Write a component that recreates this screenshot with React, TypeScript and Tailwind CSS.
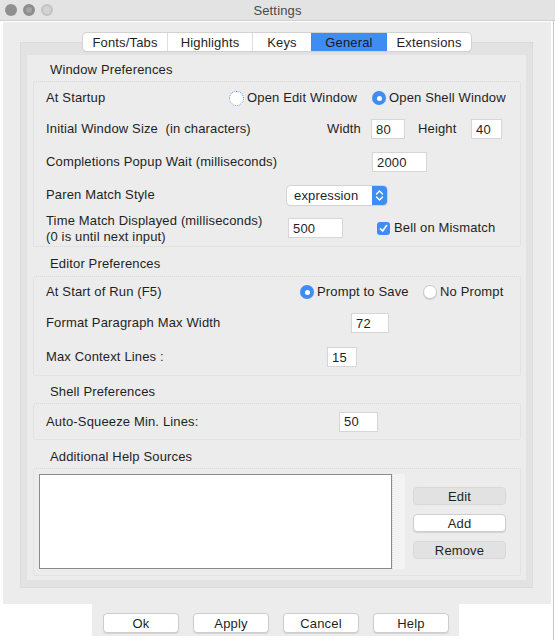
import React from "react";

function Radio({ checked, focus }: { checked?: boolean; focus?: boolean }) {
  if (checked) {
    return (
      <span className="w-[14px] h-[14px] rounded-full bg-[#3f8cf5] flex items-center justify-center shrink-0">
        <span className="w-[5px] h-[5px] rounded-full bg-white" />
      </span>
    );
  }
  return (
    <span
      className={
        focus
          ? "w-[15px] h-[15px] rounded-full bg-white border border-dotted border-[#5b8fe0] shrink-0"
          : "w-[14px] h-[14px] rounded-full bg-white border border-[#c9c9c9] shadow-[0_1px_1px_rgba(0,0,0,0.12)] shrink-0"
      }
    />
  );
}

function Field({ value, w }: { value: string; w: string }) {
  return (
    <div className={`${w} h-[20px] bg-white border border-[#d6d6d6] pl-[4px] flex items-center leading-none`}>
      {value}
    </div>
  );
}

function GroupLabel({ text, h, pt }: { text: string; h: string; pt: string }) {
  return (
    <div className={`${h} ${pt} pl-[17px] leading-[16px]`}>{text}</div>
  );
}

function TitleBar() {
  return (
    <div className="h-[21px] bg-[#e3e3e3] border-b border-[#d0d0d0] relative flex items-center justify-center">
      <div className="absolute left-[5px] top-[4px] flex gap-[6px]">
        <span className="w-[12px] h-[12px] rounded-full bg-[#8f8f8f]" />
        <span className="w-[12px] h-[12px] rounded-full bg-[#a3a3a3] border-[3px] border-[#8d8d8d]" />
        <span className="w-[12px] h-[12px] rounded-full bg-[#d2d2d2] border-2 border-[#c2c2c2]" />
      </div>
      <span className="text-[#4a4a4a] leading-none">Settings</span>
    </div>
  );
}

const tabs = [
  { name: "Fonts/Tabs", w: "w-[84px]" },
  { name: "Highlights", w: "w-[85px]" },
  { name: "Keys", w: "w-[59px]" },
  { name: "General", w: "w-[76px]" },
  { name: "Extensions", w: "w-[84px]" },
];

function Btn({ label, disabled, w, h }: { label: string; disabled?: boolean; w: string; h: string }) {
  return (
    <div
      className={`${w} ${h} rounded-[4px] flex items-center justify-center leading-none border ${
        disabled ? "bg-[#e2e2e2] border-[#d8d8d8]" : "bg-white border-[#cdcdcd] shadow-[0_1px_1px_rgba(0,0,0,0.1)]"
      }`}
    >
      {label}
    </div>
  );
}

export default function App() {
  return (
    <div className="w-[555px] h-[640px] bg-white relative font-['Liberation_Sans',Arial,sans-serif] text-[13px] tracking-[0.15px] text-[#1f1f1f] overflow-hidden">
      <TitleBar />
      <div className="absolute right-[1px] top-[21px] bottom-0 w-px bg-[#c4c4c4]" />

      <div className="mx-[3px] mt-px w-[548px] h-[582px] bg-[#ececec] pt-[11px]">
        {/* tabs */}
        <div className="flex justify-center relative z-10">
          <div className="flex h-[18px] bg-white rounded-[4px] shadow-[0_0_0_1px_#d2d2d2,0_1px_1px_rgba(0,0,0,0.15)] overflow-hidden">
            {tabs.map((t, i) => (
              <div
                key={t.name}
                className={`${t.w} flex items-center justify-center leading-none ${
                  t.name === "General" ? "bg-[#3f8cf5] text-[#1a1a1a]" : i > 0 && tabs[i - 1].name !== "General" ? "border-l border-[#dedede]" : ""
                }`}
              >
                {t.name}
              </div>
            ))}
          </div>
        </div>

        {/* tab panel */}
        <div className="ml-[17px] w-[513px] h-[546px] -mt-[9px] bg-[#e2e2e2] border border-dotted border-[#d6d6d6] pt-[12px] px-[6px]">
          <div className="h-[525px] bg-[#ececec] pl-[6px] pr-[5px]">
            <GroupLabel text="Window Preferences" h="h-[26px]" pt="pt-[7px]" />
            <div className="border border-dotted border-[#d9d9d9] rounded-[3px] pl-[12px]">
              <div className="h-[32px] flex items-center">
                <span className="w-[183px]">At Startup</span>
                <div className="w-[143px] flex items-center gap-[3px]">
                  <Radio focus />
                  <span>Open Edit Window</span>
                </div>
                <div className="flex items-center gap-[3px]">
                  <Radio checked />
                  <span>Open Shell Window</span>
                </div>
              </div>
              <div className="h-[30px] flex items-center">
                <span className="w-[281px]">Initial Window Size&nbsp; (in characters)</span>
                <span className="w-[44px]">Width</span>
                <Field value="80" w="w-[34px]" />
                <span className="w-[53px] ml-[13px]">Height</span>
                <Field value="40" w="w-[31px]" />
              </div>
              <div className="h-[36px] flex items-center">
                <span className="w-[326px]">Completions Popup Wait (milliseconds)</span>
                <Field value="2000" w="w-[55px]" />
              </div>
              <div className="h-[30px] flex items-center">
                <span className="w-[241px]">Paren Match Style</span>
                <div className="w-[100px] h-[19px] bg-white rounded-[4px] shadow-[0_0_0_1px_#d4d4d4,0_1px_1px_rgba(0,0,0,0.15)] flex items-center overflow-hidden">
                  <span className="flex-1 pl-[7px] leading-none">expression</span>
                  <span className="w-[15px] h-full bg-[#3f8cf5] flex items-center justify-center">
                    <svg width="9" height="13" viewBox="0 0 9 13" fill="none" stroke="white" strokeWidth="1.4" strokeLinecap="round" strokeLinejoin="round">
                      <path d="M1.5 5 L4.5 2 L7.5 5" />
                      <path d="M1.5 8 L4.5 11 L7.5 8" />
                    </svg>
                  </span>
                </div>
              </div>
              <div className="h-[36px] flex items-center">
                <span className="w-[242px] leading-[16px] pt-[1px]">
                  Time Match Displayed (milliseconds)
                  <br />
                  (0 is until next input)
                </span>
                <Field value="500" w="w-[55px]" />
                <div className="ml-[34px] flex items-center gap-[4px]">
                  <span className="w-[13px] h-[13px] rounded-[3px] bg-[#3f8cf5] flex items-center justify-center">
                    <svg width="9" height="9" viewBox="0 0 9 9" fill="none" stroke="white" strokeWidth="1.7" strokeLinecap="round" strokeLinejoin="round">
                      <path d="M1.5 4.8 L3.6 7 L7.6 1.6" />
                    </svg>
                  </span>
                  <span>Bell on Mismatch</span>
                </div>
              </div>
            </div>

            <GroupLabel text="Editor Preferences" h="h-[29px]" pt="pt-[9px]" />
            <div className="border border-dotted border-[#d9d9d9] rounded-[3px] pl-[12px]">
              <div className="h-[30px] flex items-center">
                <span className="w-[254px]">At Start of Run (F5)</span>
                <div className="w-[123px] flex items-center gap-[3px]">
                  <Radio checked />
                  <span>Prompt to Save</span>
                </div>
                <div className="flex items-center gap-[3px]">
                  <Radio />
                  <span>No Prompt</span>
                </div>
              </div>
              <div className="h-[32px] flex items-center">
                <span className="w-[305px]">Format Paragraph Max Width</span>
                <Field value="72" w="w-[38px]" />
              </div>
              <div className="h-[36px] flex items-center">
                <span className="w-[281px]">Max Context Lines :</span>
                <Field value="15" w="w-[30px]" />
              </div>
            </div>

            <GroupLabel text="Shell Preferences" h="h-[27px]" pt="pt-[8px]" />
            <div className="border border-dotted border-[#d9d9d9] rounded-[3px] pl-[12px]">
              <div className="h-[35px] flex items-center">
                <span className="w-[293px]">Auto-Squeeze Min. Lines:</span>
                <Field value="50" w="w-[39px]" />
              </div>
            </div>

            <GroupLabel text="Additional Help Sources" h="h-[28px]" pt="pt-[9px]" />
            <div className="border border-dotted border-[#d9d9d9] rounded-[3px] pl-[5px] pt-[5px] pb-[6px] flex">
              <div className="w-[353px] h-[95px] bg-white border border-[#8a8a8a]" />
              <div className="w-[13px] h-[95px] bg-[#f3f3f3] border-l border-dotted border-[#dadada]" />
              <div className="ml-[8px] pt-[13px] flex flex-col gap-[9px]">
                <Btn label="Edit" disabled w="w-[93px]" h="h-[18px]" />
                <Btn label="Add" w="w-[93px]" h="h-[18px]" />
                <Btn label="Remove" disabled w="w-[93px]" h="h-[18px]" />
              </div>
            </div>
          </div>
        </div>
      </div>

      {/* bottom buttons */}
      <div className="ml-[92px] w-[367px] h-[32px] bg-[#ececec] pl-[11px] pt-[9px] flex gap-[14px]">
        <Btn label="Ok" w="w-[76px]" h="h-[20px]" />
        <Btn label="Apply" w="w-[76px]" h="h-[20px]" />
        <Btn label="Cancel" w="w-[76px]" h="h-[20px]" />
        <Btn label="Help" w="w-[76px]" h="h-[20px]" />
      </div>
    </div>
  );
}
